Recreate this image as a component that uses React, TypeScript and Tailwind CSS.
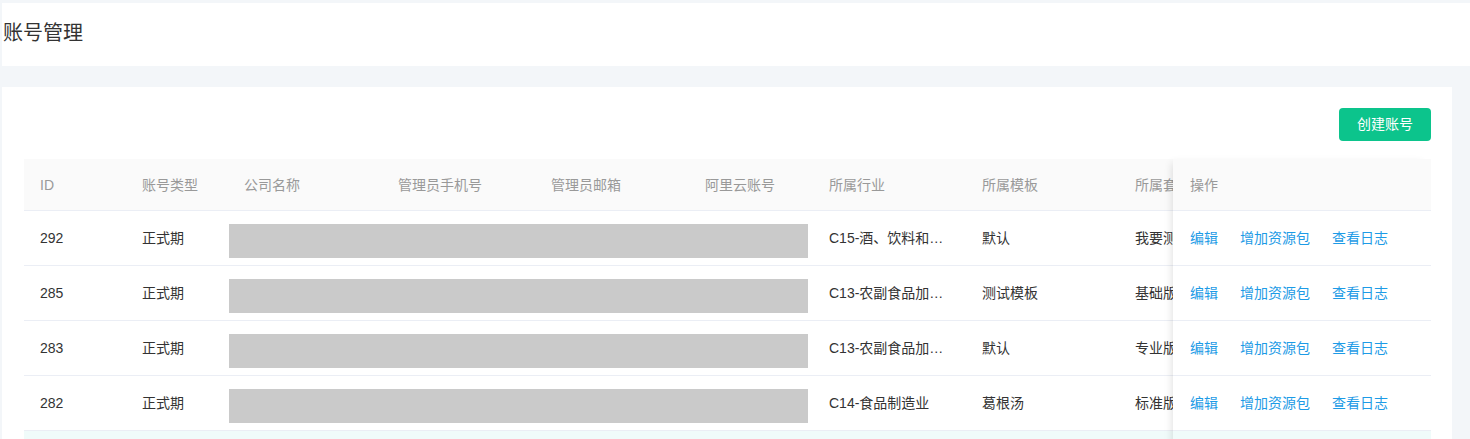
import React from 'react';

interface Row {
  id: number;
  type: string;
  industry: string;
  template: string;
  plan: string;
}

const rows: Row[] = [
  { id: 292, type: '正式期', industry: 'C15-酒、饮料和精制茶制造业', template: '默认', plan: '我要测试套餐' },
  { id: 285, type: '正式期', industry: 'C13-农副食品加工业', template: '测试模板', plan: '基础版套餐' },
  { id: 283, type: '正式期', industry: 'C13-农副食品加工业', template: '默认', plan: '专业版套餐' },
  { id: 282, type: '正式期', industry: 'C14-食品制造业', template: '葛根汤', plan: '标准版套餐' },
  { id: 281, type: '试用期', industry: 'C14-食品制造业', template: '默认', plan: '标准版套餐' },
];

const headers = ['ID', '账号类型', '公司名称', '管理员手机号', '管理员邮箱', '阿里云账号', '所属行业', '所属模板', '所属套餐'];

const grid = 'grid grid-cols-[102px_102px_154px_153px_154px_124px_153px_153px_153px]';

export default function App() {
  return (
    <div
      className="h-screen overflow-hidden bg-[#f3f6f9] pt-[3px] pl-[2px] text-[14px]"
      style={{ fontFamily: '"Liberation Sans", "Noto Sans CJK SC", sans-serif' }}
    >
      <div className="h-[63px] bg-white flex items-center pl-[1px]">
        <h1 className="text-[20px] leading-none text-[#333] mt-[-4px]">账号管理</h1>
      </div>

      <div className="mt-[21px] mr-[18px] bg-white pt-[21px] pl-[22px] pr-[21px] h-[400px]">
        <div className="flex justify-end">
          <button className="h-[33px] w-[92px] rounded-[4px] bg-[#0cc48c] text-white text-[14px]">创建账号</button>
        </div>

        <div className="mt-[18px] flex">
          {/* scrollable part */}
          <div className="flex-1 overflow-hidden">
            <div className="w-max">
              <div className={`${grid} h-[52px] bg-[#fafafa] border-b border-[#ebeef5] text-[#999]`}>
                {headers.map((h) => (
                  <div key={h} className="flex items-center px-4 pt-[1px] whitespace-nowrap overflow-hidden">
                    {h}
                  </div>
                ))}
              </div>
              {rows.map((r, i) => (
                <div
                  key={r.id}
                  className={`${grid} h-[55px] border-b border-[#ebeef5] text-[#333] ${i === 4 ? 'bg-[#f0fbfa]' : ''}`}
                >
                  <div className="flex items-center px-4">{r.id}</div>
                  <div className="flex items-center px-4">{r.type}</div>
                  <div className="col-span-4 pt-[13px] pl-[1px] pr-[5px]">
                    <div className="h-[34px] bg-[#cacaca]" />
                  </div>
                  <div className="flex items-center px-4 min-w-0">
                    <span className="truncate">{r.industry}</span>
                  </div>
                  <div className="flex items-center px-4">{r.template}</div>
                  <div className="flex items-center px-4 whitespace-nowrap">{r.plan}</div>
                </div>
              ))}
            </div>
          </div>

          {/* fixed column */}
          <div className="w-[258px] shrink-0 bg-white shadow-[-5px_0_8px_-4px_rgba(0,0,0,0.12)] relative">
            <div className="h-[52px] bg-[#fafafa] border-b border-[#ebeef5] flex items-center pl-[17px] pt-[1px] text-[#999]">
              操作
            </div>
            {rows.map((r, i) => (
              <div
                key={r.id}
                className={`h-[55px] border-b border-[#ebeef5] flex items-center gap-[22px] pl-[17px] text-[#1d9be6] ${
                  i === 4 ? 'bg-[#f0fbfa]' : ''
                }`}
              >
                <a>编辑</a>
                <a>增加资源包</a>
                <a>查看日志</a>
              </div>
            ))}
          </div>
        </div>
      </div>
    </div>
  );
}
